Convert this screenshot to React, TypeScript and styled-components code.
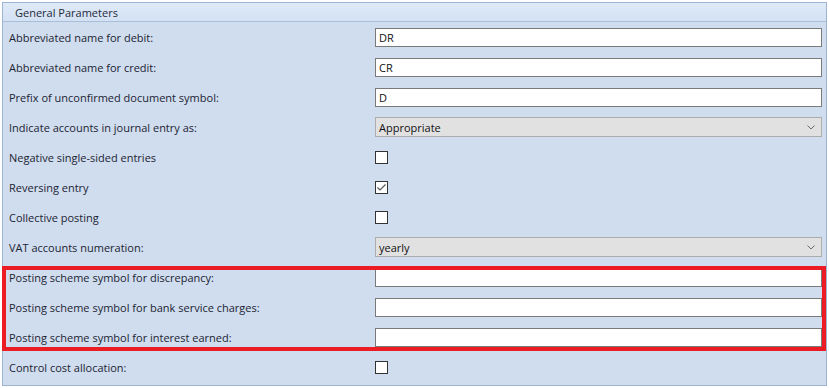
import React from 'react';
import styled, { createGlobalStyle } from 'styled-components';

const GlobalStyle = createGlobalStyle`
  html, body {
    margin: 0;
    padding: 0;
    background: #ffffff;
  }
  body {
    font-family: "Open Sans", "Noto Sans", "Liberation Sans", sans-serif;
    font-size: 11px;
    color: #1b2433;
  }
`;

const Page = styled.div`
  padding: 2px;
  width: 825px;
  height: 384px;
`;

const Panel = styled.section`
  box-sizing: border-box;
  width: 825px;
  height: 384px;
  border: 1px solid #9fb4d2;
  background: #d0ddee;
  display: flex;
  flex-direction: column;
`;

const Header = styled.div`
  height: 18px;
  border-bottom: 1px solid #a8bfdc;
  background: linear-gradient(to bottom, #dfeaf7 0%, #d3e1f3 100%);
  display: flex;
  align-items: center;
  padding-left: 12px;
  font-size: 11px;
  color: #1f2a3a;
`;

const Rows = styled.div`
  display: flex;
  flex-direction: column;
`;

const Row = styled.div`
  height: 30px;
  display: grid;
  grid-template-columns: 366px 447px;
  align-items: center;
  padding-left: 6px;
`;

const Label = styled.span`
  white-space: nowrap;
`;

const TextBox = styled.div`
  box-sizing: border-box;
  height: 19px;
  border: 1px solid #7a7a7a;
  background: #ffffff;
  padding-left: 3px;
  display: flex;
  align-items: center;
  color: #111;
`;

const Combo = styled.div`
  box-sizing: border-box;
  height: 20px;
  border: 1px solid #acacac;
  background: #e1e1e1;
  padding: 0 6px 0 3px;
  display: flex;
  align-items: center;
  justify-content: space-between;
  color: #111;
`;

const Box = styled.div`
  box-sizing: border-box;
  width: 13px;
  height: 13px;
  border: 1px solid #333333;
  background: #ffffff;
  display: flex;
  align-items: center;
  justify-content: center;
`;

const Highlight = styled.div`
  position: relative;
  &::after {
    content: '';
    position: absolute;
    left: -1px;
    right: 0px;
    top: 4px;
    bottom: 1px;
    border: 4px solid #ec1c24;
    pointer-events: none;
  }
`;

const Chevron = () => (
  <svg width="8" height="5" viewBox="0 0 8 5">
    <path d="M0.5 0.5 L4 4 L7.5 0.5" fill="none" stroke="#6a6a6a" strokeWidth="1" />
  </svg>
);

const Check = () => (
  <svg width="11" height="11" viewBox="0 0 11 11">
    <path d="M1.5 5.5 L4 8 L9.5 2.5" fill="none" stroke="#555" strokeWidth="1.2" />
  </svg>
);

type Field =
  | { label: string; kind: 'text'; value?: string }
  | { label: string; kind: 'combo'; value: string }
  | { label: string; kind: 'check'; checked?: boolean };

const Control = ({ f }: { f: Field }) => {
  if (f.kind === 'text') return <TextBox>{f.value}</TextBox>;
  if (f.kind === 'combo')
    return (
      <Combo>
        <span>{f.value}</span>
        <Chevron />
      </Combo>
    );
  return <Box>{f.checked ? <Check /> : null}</Box>;
};

const top: Field[] = [
  { label: 'Abbreviated name for debit:', kind: 'text', value: 'DR' },
  { label: 'Abbreviated name for credit:', kind: 'text', value: 'CR' },
  { label: 'Prefix of unconfirmed document symbol:', kind: 'text', value: 'D' },
  { label: 'Indicate accounts in journal entry as:', kind: 'combo', value: 'Appropriate' },
  { label: 'Negative single-sided entries', kind: 'check' },
  { label: 'Reversing entry', kind: 'check', checked: true },
  { label: 'Collective posting', kind: 'check' },
  { label: 'VAT accounts numeration:', kind: 'combo', value: 'yearly' },
];

const marked: Field[] = [
  { label: 'Posting scheme symbol for discrepancy:', kind: 'text' },
  { label: 'Posting scheme symbol for bank service charges:', kind: 'text' },
  { label: 'Posting scheme symbol for interest earned:', kind: 'text' },
];

const bottom: Field[] = [{ label: 'Control cost allocation:', kind: 'check' }];

const renderRow = (f: Field) => (
  <Row key={f.label}>
    <Label>{f.label}</Label>
    <Control f={f} />
  </Row>
);

export default function App() {
  return (
    <>
      <GlobalStyle />
      <Page>
        <Panel>
          <Header>General Parameters</Header>
          <Rows>
            {top.map(renderRow)}
            <Highlight>{marked.map(renderRow)}</Highlight>
            {bottom.map(renderRow)}
          </Rows>
        </Panel>
      </Page>
    </>
  );
}
